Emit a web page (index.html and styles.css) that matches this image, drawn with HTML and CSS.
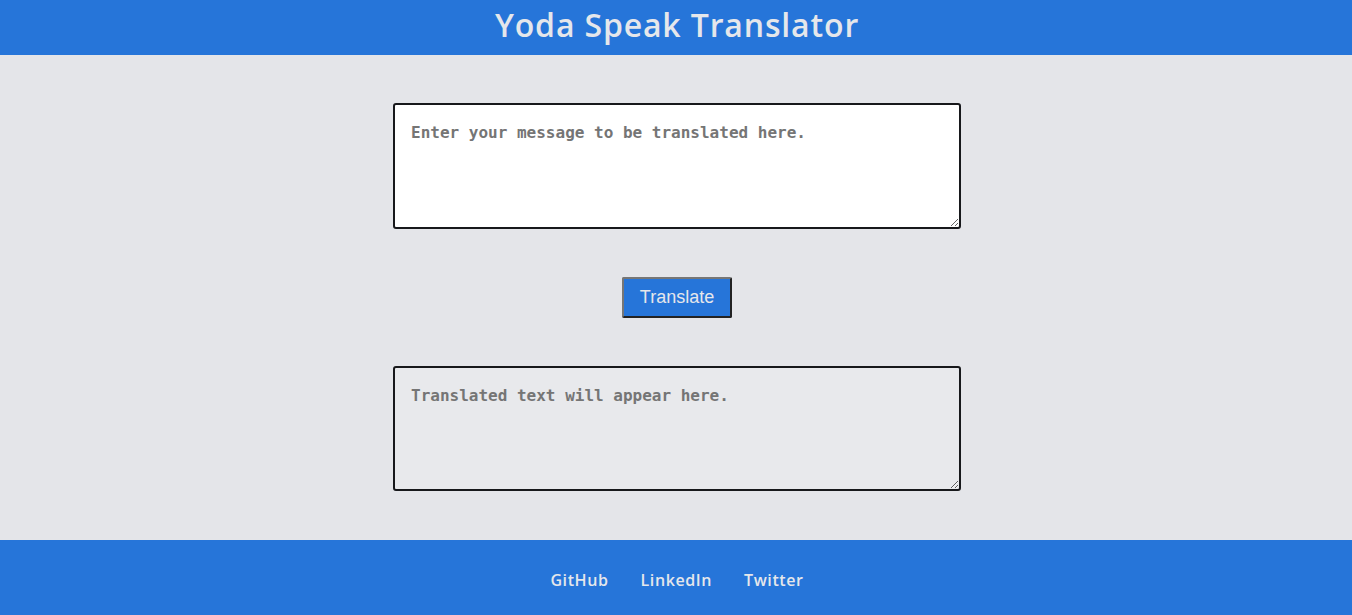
FILE: index.html
```html
<!DOCTYPE html>
<html lang="en">
<head>
<meta charset="utf-8">
<title>Yoda Speak Translator</title>
<link rel="stylesheet" href="styles.css">
</head>
<body>
<header class="header">
  <h1 class="title">Yoda Speak Translator</h1>
</header>
<main class="main">
  <textarea class="box box-input" placeholder="Enter your message to be translated here."></textarea>
  <button class="btn">Translate</button>
  <textarea class="box box-output" placeholder="Translated text will appear here." readonly></textarea>
</main>
<footer class="footer">
  <a class="link" href="#">GitHub</a>
  <a class="link" href="#">LinkedIn</a>
  <a class="link" href="#">Twitter</a>
</footer>
</body>
</html>
```
FILE: styles.css
```css
* { box-sizing: border-box; }
html, body { margin: 0; padding: 0; }
body {
  background: #e4e5e9;
  font-family: "Open Sans", "Liberation Sans", sans-serif;
  height: 615px;
  display: flex;
  flex-direction: column;
}
.header {
  background: #2675d9;
  height: 55px;
  display: flex;
  align-items: center;
  justify-content: center;
  padding-bottom: 5px;
  padding-left: 2px;
}
.title {
  margin: 0;
  color: #e5e7eb;
  font-size: 32px;
  font-weight: 600;
  letter-spacing: 0.85px;
  line-height: 1;
}
.main {
  flex: 1;
  display: flex;
  flex-direction: column;
  align-items: center;
  gap: 48px;
  padding-top: 48px;
  padding-left: 2px;
}
.box {
  width: 568px;
  height: 126px;
  border: 2px solid #17181b;
  border-radius: 3px;
  padding: 18px 16px 16px;
  font-family: "DejaVu Sans Mono", monospace;
  font-weight: bold;
  font-size: 16px;
  display: block;
}
.box::placeholder { color: #757575; }
.box-input { background: #ffffff; }
.box-output { background: #e8e9ec; height: 125px; }
.btn {
  width: 110px;
  height: 41px;
  background: #2675d9;
  color: #e5e7eb;
  font-family: "Liberation Sans", Arial, sans-serif;
  font-size: 18px;
  border: 2px solid;
  border-color: #767676 #222 #222 #767676;
  border-radius: 2px;
  padding: 0;
}
.footer {
  background: #2675d9;
  height: 75px;
  display: flex;
  align-items: center;
  justify-content: center;
  gap: 32px;
  padding-top: 4px;
  padding-left: 2px;
}
.link {
  color: #e5e7eb;
  text-decoration: none;
  font-size: 16px;
  font-weight: 600;
  letter-spacing: 0.6px;
}
```
